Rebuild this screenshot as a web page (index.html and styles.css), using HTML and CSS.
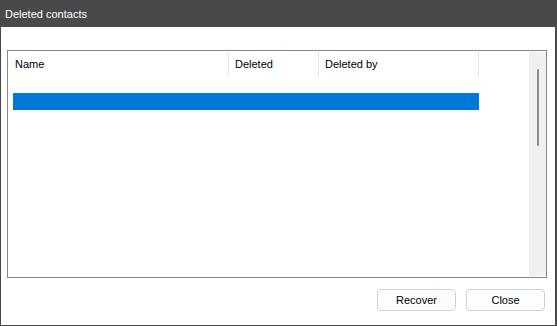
FILE: index.html
```html
<!DOCTYPE html>
<html>
<head>
<meta charset="utf-8">
<link rel="stylesheet" href="styles.css">
</head>
<body>
<div class="window">
  <div class="titlebar">Deleted contacts</div>
  <div class="client">
    <div class="listbox">
      <div class="listmain">
        <div class="header">
          <div class="col col-name">Name</div>
          <div class="col col-deleted">Deleted</div>
          <div class="col col-by">Deleted by</div>
        </div>
        <div class="rows">
          <div class="row selected"></div>
        </div>
      </div>
      <div class="scrollbar"><div class="thumb"></div></div>
    </div>
    <div class="buttons">
      <button class="btn">Recover</button>
      <button class="btn">Close</button>
    </div>
  </div>
</div>
</body>
</html>
```
FILE: styles.css
```css
* { box-sizing: border-box; }
html, body { margin: 0; padding: 0; background: #ffffff; }
body {
  font-family: "Liberation Sans", Arial, sans-serif;
  font-size: 11px;
  color: #000;
}
.window {
  width: 557px;
  height: 326px;
  display: flex;
  flex-direction: column;
}
.titlebar {
  height: 27px;
  background: #4a4949;
  color: #ffffff;
  font-size: 11px;
  display: flex;
  align-items: center;
  padding-left: 5px;
  padding-top: 1px;
}
.client {
  flex: 1;
  border-left: 1px solid #4a4949;
  border-right: 2px solid #4a4949;
  border-bottom: 1px solid #4a4949;
  padding: 23px 0 0 6px;
  display: flex;
  flex-direction: column;
}
.listbox {
  width: 540px;
  height: 228px;
  border: 1px solid #828790;
  padding: 1px 0;
  display: flex;
}
.listmain {
  flex: 1;
  display: flex;
  flex-direction: column;
}
.header {
  display: flex;
  height: 24px;
}
.col {
  border-right: 1px solid #e5e5e5;
  padding-top: 6px;
  line-height: 12px;
}
.col-name { width: 221px; padding-left: 7px; }
.col-deleted { width: 90px; padding-left: 6px; }
.col-by { width: 160px; padding-left: 6px; }
.rows {
  padding-top: 17px;
}
.row {
  height: 17px;
  width: 466px;
  margin-left: 5px;
}
.row.selected { background: #0078d7; }
.scrollbar {
  width: 17px;
  background: #f0f0f0;
  display: flex;
  justify-content: center;
  padding-top: 17px;
}
.thumb {
  width: 2px;
  height: 77px;
  background: #8a8a8a;
  border-radius: 1px;
}
.buttons {
  display: flex;
  justify-content: flex-end;
  gap: 10px;
  margin-top: 11px;
  padding-right: 10px;
}
.btn {
  width: 79px;
  height: 22px;
  border: 1px solid #d0d0d0;
  border-radius: 4px;
  background: #fdfdfd;
  font-family: "Liberation Sans", Arial, sans-serif;
  font-size: 11px;
  color: #000;
  padding: 0;
}
```
